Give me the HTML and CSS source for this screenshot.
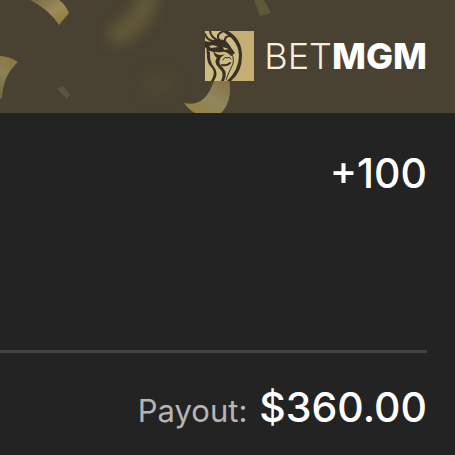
FILE: index.html
```
<!DOCTYPE html>
<html lang="en">
<head>
    <meta charset="UTF-8">
    <meta name="viewport" content="width=device-width, initial-scale=1.0">
    <title>BetMGM Bet Slip</title>
    <link rel="stylesheet" href="styles.css">
</head>
<body>

<header class="banner">
    <svg class="confetti" width="455" height="113" viewBox="0 0 455 113" aria-hidden="true">
        <defs>
            <linearGradient id="goldA" x1="0" y1="0" x2="1" y2="1">
                <stop offset="0" stop-color="#6f6748"/>
                <stop offset="0.55" stop-color="#9c8b58"/>
                <stop offset="1" stop-color="#8b7833"/>
            </linearGradient>
            <linearGradient id="goldB" x1="0.6" y1="0" x2="0.3" y2="1">
                <stop offset="0" stop-color="#8d7642"/>
                <stop offset="0.5" stop-color="#8b8056"/>
                <stop offset="1" stop-color="#756a3e"/>
            </linearGradient>
            <linearGradient id="goldC" x1="1" y1="0" x2="0" y2="1">
                <stop offset="0" stop-color="#857044"/>
                <stop offset="0.5" stop-color="#91865c"/>
                <stop offset="1" stop-color="#94813d"/>
            </linearGradient>
            <filter id="soft" filterUnits="userSpaceOnUse" x="60" y="-50" width="160" height="180">
                <feGaussianBlur stdDeviation="7"/>
            </filter>
        </defs>
        <path d="M148 -8 Q146 20 118 34" fill="none" stroke="#645a38" stroke-width="20" stroke-linecap="round" filter="url(#soft)"/>
        <ellipse cx="158" cy="84" rx="18" ry="12" fill="#4e4632" filter="url(#soft)"/>
        <path d="M28 -1 L58 -1 Q65 4 69 13 L59 25 Q49 9 28 -1Z" fill="url(#goldA)"/>
        <path d="M0 56 Q9 56 18 62 Q3 75 2 98 L0 99Z" fill="url(#goldB)"/>
        <path d="M57 89 L63 86 L70 95 L67 99Z" fill="#5b553e"/>
        <path d="M254 0 L264 0 L271 13 L260 16Z" fill="#5f593c"/>
        <path d="M214 81 L229 79 Q233 101 221 113 L195 113 Q188 109 184 103 Q205 108 214 81Z" fill="url(#goldC)"/>
    </svg>

    <div class="brand">
        <svg class="lion" width="49" height="50" viewBox="0 0 49 50" aria-hidden="true">
            <rect width="49" height="50" fill="#c4ae71"/>
            <path d="M0 0H17Q36 7 36 24Q36 40 24 50H0Z" fill="#cdbb82"/>
            <g fill="#393125">
                <path d="M16 0H23Q37 8 37 25Q37 41 26 50H22Q34 39 34 24Q33 8 16 0Z"/>
                <path d="M0 10Q5 12 9 9Q16 7 21 10Q24 13 27 18L30 22L26 25Q21 20 17 21Q10 22 5 20L1 22Q3 18 0 16Z"/>
                <path d="M8 20Q13 26 20 23Q15 28 12 27Q9 25 8 20Z"/>
                <path d="M2 21Q1 32 7 37Q11 42 6 50H9Q14 42 9 36Q4 30 5 21Z"/>
                <path d="M14 25Q7 30 14 37Q20 42 16 50H19Q23 42 18 37Q12 32 16 26Z"/>
            </g>
            <path d="M4 15Q9 13 13 16L6 17ZM18 16L24 18L19 19Z" fill="#cdbb82"/>
            <g fill="none" stroke="#393125" stroke-width="2" stroke-linecap="round">
                <path d="M5 0Q6 6 12 9"/>
                <path d="M0 3Q2 9 8 10"/>
                <path d="M17 1Q11 3 14 9"/>
                <path d="M25 5Q19 5 20 11"/>
                <path d="M26 22Q31 29 26 37Q23 43 21 49" stroke-width="1"/>
                <path d="M18 29Q20 25 22 27Q25 25 26 28" stroke-width="1"/>
                <path d="M17 34Q22 35 25 32"/>
            </g>
        </svg>
        <span class="wordmark"><span class="bet">BET</span><span class="mgm">MGM</span></span>
    </div>
</header>

<main class="slip">
    <div class="odds">+100</div>
    <div class="payout">
        <span class="payout-label">Payout:</span>
        <span class="payout-amount">$360.00</span>
    </div>
</main>

</body>
</html>
```
FILE: styles.css
```
body {
    font-family: Inter, "Liberation Sans", sans-serif;
    background-color: #232323;
    margin: 0;
    color: #fff;
}
.banner {
    position: relative;
    display: flex;
    justify-content: flex-end;
    padding: 31px 28px 32px;
    background-color: #494132;
    overflow: hidden;
}
.confetti {
    position: absolute;
    top: 0;
    left: 0;
}
.brand {
    position: relative;
    display: flex;
    align-items: center;
    gap: 10px;
}
.lion {
    display: block;
}
.wordmark {
    font-size: 36px;
    line-height: 50px;
    white-space: nowrap;
}
.bet {
    font-weight: 300;
    color: #f7f0dc;
}
.mgm {
    font-weight: 800;
}
.slip {
    padding: 32px 28px 32px 0;
}
.odds {
    padding-bottom: 148px;
    border-bottom: 3px solid #414141;
    font-size: 41px;
    font-weight: 500;
    line-height: 57px;
    text-align: right;
}
.payout {
    display: flex;
    justify-content: flex-end;
    align-items: baseline;
    gap: 12px;
    padding-top: 26px;
}
.payout-label {
    color: #b5b5b5;
    font-size: 31px;
}
.payout-amount {
    font-size: 41px;
    font-weight: 500;
    line-height: 57px;
}
```
